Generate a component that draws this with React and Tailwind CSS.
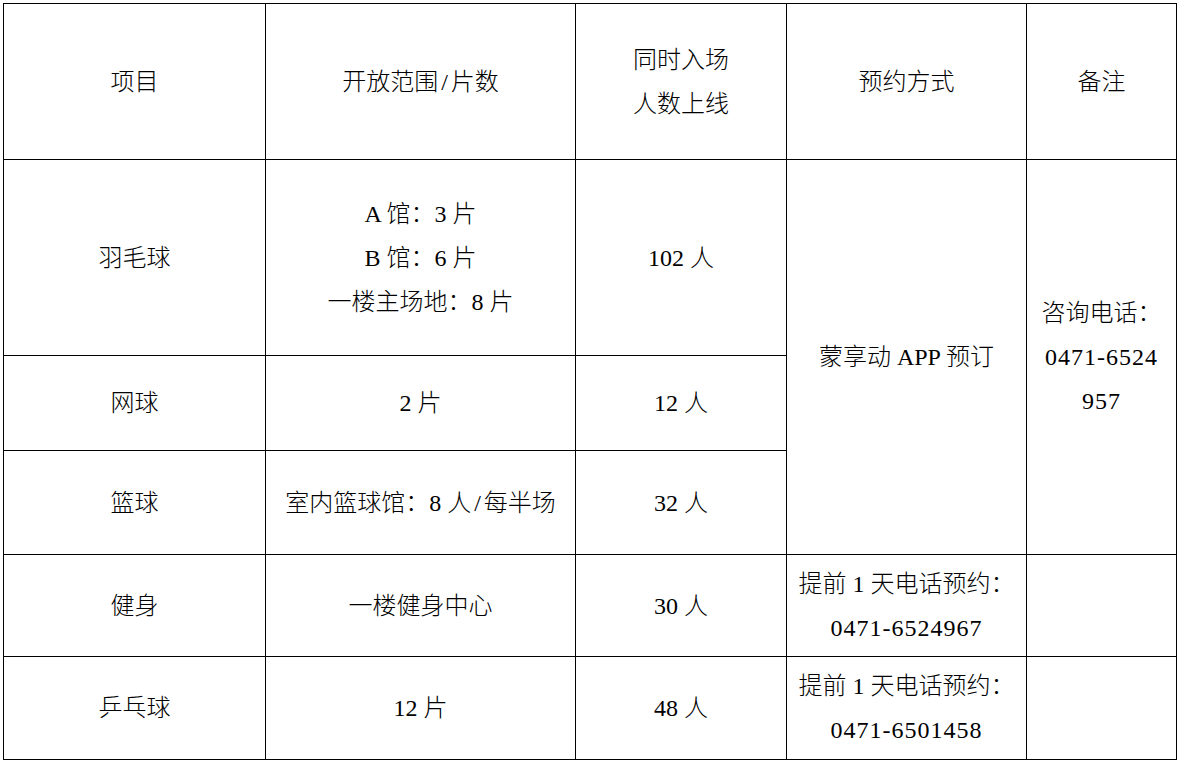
export default function App() {
    const cell = "flex flex-col items-center justify-center bg-white text-center";

    return (
        <main
            className="min-h-screen bg-white pl-[3px] pt-[3px] text-[24px] leading-[44px] text-black"
            style={{ fontFamily: '"Liberation Serif", "Noto Sans CJK SC", serif' }}
        >
            <div className="grid w-[1174px] grid-cols-[261px_309px_210px_239px_149px] grid-rows-[155px_195px_94px_103px_101px_102px] gap-px bg-black p-px font-light">
                {/* header */}
                <div className={cell}>项目</div>
                <div className={cell}>
                    <span>
                        开放范围<span className="mx-[3px]">/</span>片数
                    </span>
                </div>
                <div className={cell}>
                    <span>同时入场</span>
                    <span>人数上线</span>
                </div>
                <div className={cell}>预约方式</div>
                <div className={cell}>备注</div>

                {/* 羽毛球 */}
                <div className={cell}>羽毛球</div>
                <div className={cell}>
                    <span>A 馆：3 片</span>
                    <span>B 馆：6 片</span>
                    <span>一楼主场地：8 片</span>
                </div>
                <div className={cell}>102 人</div>
                <div className={`${cell} row-span-3`}>蒙享动 APP 预订</div>
                <div className={`${cell} row-span-3`}>
                    <span>咨询电话：</span>
                    <span className="tracking-[1px]">0471-6524</span>
                    <span className="tracking-[1px]">957</span>
                </div>

                {/* 网球 */}
                <div className={cell}>网球</div>
                <div className={cell}>2 片</div>
                <div className={cell}>12 人</div>

                {/* 篮球 */}
                <div className={cell}>篮球</div>
                <div className={cell}>
                    <span>
                        室内篮球馆：8 人<span className="mx-[3px]">/</span>每半场
                    </span>
                </div>
                <div className={cell}>32 人</div>

                {/* 健身 */}
                <div className={cell}>健身</div>
                <div className={cell}>一楼健身中心</div>
                <div className={cell}>30 人</div>
                <div className={cell}>
                    <span>提前 1 天电话预约：</span>
                    <span className="tracking-[1px]">0471-6524967</span>
                </div>
                <div className={cell}></div>

                {/* 乒乓球 */}
                <div className={cell}>乒乓球</div>
                <div className={cell}>12 片</div>
                <div className={cell}>48 人</div>
                <div className={cell}>
                    <span>提前 1 天电话预约：</span>
                    <span className="tracking-[1px]">0471-6501458</span>
                </div>
                <div className={cell}></div>
            </div>
        </main>
    );
}
